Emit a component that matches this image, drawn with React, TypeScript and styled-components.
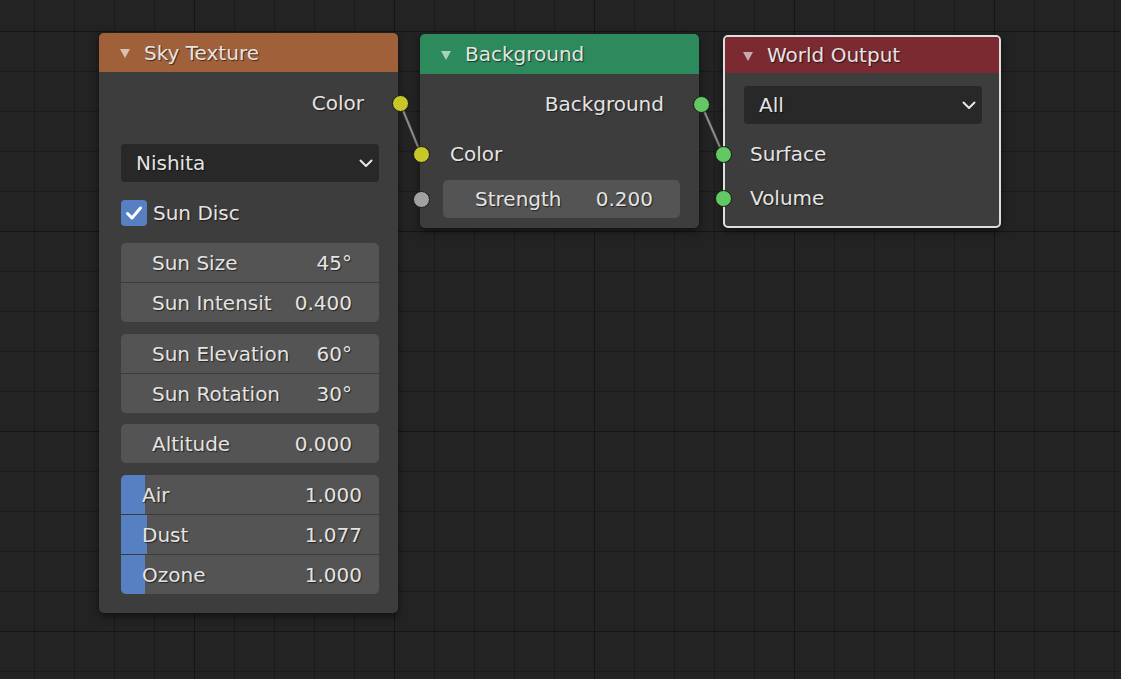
import React from 'react';
import styled, { createGlobalStyle } from 'styled-components';

const Global = createGlobalStyle`
  html, body { margin: 0; padding: 0; background: #232323; }
  body { font-family: "DejaVu Sans", "Noto Sans", sans-serif; }
`;

const Canvas = styled.div`
  position: relative;
  width: 1121px;
  height: 679px;
  overflow: hidden;
  background-color: #232323;
  background-image:
    linear-gradient(to right, #151515 1px, transparent 1px),
    linear-gradient(to bottom, #151515 1px, transparent 1px),
    linear-gradient(to right, #1b1b1b 1px, transparent 1px),
    linear-gradient(to bottom, #1b1b1b 1px, transparent 1px);
  background-size: 200px 100%, 100% 200px, 40px 100%, 100% 40px;
  background-position: 194px 0, 0 31px, 34px 0, 0 31px;
  font-family: "DejaVu Sans", "Noto Sans", sans-serif;
  font-size: 20px;
  color: #e4e4e4;
`;

const Links = styled.svg`
  position: absolute;
  left: 0;
  top: 0;
  pointer-events: none;
`;

const Node = styled.div<{ $x: number; $y: number; $w: number; $selected?: boolean; $pb: number }>`
  position: absolute;
  left: ${p => p.$x}px;
  top: ${p => p.$y}px;
  width: ${p => p.$w}px;
  box-sizing: border-box;
  display: flex;
  flex-direction: column;
  padding-bottom: ${p => p.$pb}px;
  background: #3d3d3d;
  border-radius: 5px;
  border: ${p => (p.$selected ? '2px solid #dedede' : 'none')};
  box-shadow: 0 3px 9px rgba(0, 0, 0, 0.55);
`;

const Header = styled.div<{ $color: string; $h: number; $pl: number; $r: number }>`
  height: ${p => p.$h}px;
  background: ${p => p.$color};
  border-radius: ${p => p.$r}px ${p => p.$r}px 0 0;
  display: flex;
  align-items: center;
  padding-left: ${p => p.$pl}px;
  gap: 14px;
`;

const Collapse = styled.span`
  width: 0;
  height: 0;
  border-left: 5.5px solid transparent;
  border-right: 5.5px solid transparent;
  border-top: 9px solid rgba(255, 255, 255, 0.6);
  margin-top: 2px;
`;

const Label = styled.span`
  position: relative;
  white-space: nowrap;
  text-shadow: 1px 1px 1px rgba(0, 0, 0, 0.6);
`;

const SocketRow = styled.div<{ $out?: boolean; $mt: number; $pad: number; $h?: number }>`
  position: relative;
  height: ${p => p.$h ?? 40}px;
  margin-top: ${p => p.$mt}px;
  display: flex;
  align-items: center;
  justify-content: ${p => (p.$out ? 'flex-end' : 'flex-start')};
  padding: ${p => (p.$out ? `0 ${p.$pad}px 0 0` : `0 0 0 ${p.$pad}px`)};
`;

const Socket = styled.span<{ $color: string; $side: 'left' | 'right'; $off: number }>`
  position: absolute;
  top: 50%;
  ${p => p.$side}: ${p => p.$off}px;
  width: 17px;
  height: 17px;
  margin-top: -8.5px;
  box-sizing: border-box;
  border-radius: 50%;
  background: ${p => p.$color};
  border: 1px solid #181818;
`;

const Dropdown = styled.div<{ $mt: number; $ml: number; $mr: number }>`
  margin: ${p => p.$mt}px ${p => p.$mr}px 0 ${p => p.$ml}px;
  height: 38px;
  box-sizing: border-box;
  background: #282828;
  border-radius: 4px;
  display: flex;
  align-items: center;
  justify-content: space-between;
  padding: 0 6px 0 15px;
`;

const CheckRow = styled.div`
  margin: 18px 19px 0 22px;
  height: 26px;
  display: flex;
  align-items: center;
  gap: 6px;
`;

const CheckBox = styled.span`
  width: 26px;
  height: 26px;
  border-radius: 4px;
  background: #5680c2;
  display: flex;
  align-items: center;
  justify-content: center;
`;

const FieldGroup = styled.div<{ $mt: number; $ml: number; $mr: number }>`
  margin: ${p => p.$mt}px ${p => p.$mr}px 0 ${p => p.$ml}px;
  border-radius: 5px;
  overflow: hidden;
  background: #545454;
  display: flex;
  flex-direction: column;
`;

const FieldRow = styled.div<{ $pl: number; $pr: number; $h?: number }>`
  position: relative;
  height: ${p => p.$h ?? 39}px;
  box-sizing: content-box;
  display: flex;
  align-items: center;
  justify-content: space-between;
  padding: 0 ${p => p.$pr}px 0 ${p => p.$pl}px;
  & + & {
    border-top: 1px solid #3b3b3b;
  }
`;

const Fill = styled.span`
  position: absolute;
  left: 0;
  top: 0;
  bottom: 0;
  background: #5680c2;
`;

const Chevron = () => (
  <svg width="14" height="9" viewBox="0 0 14 9">
    <polyline points="1.5,1.5 7,7 12.5,1.5" fill="none" stroke="#e6e6e6" strokeWidth="2" strokeLinecap="round" strokeLinejoin="round" />
  </svg>
);

const Check = () => (
  <svg width="20" height="20" viewBox="0 0 20 20">
    <polyline points="3.5,10.5 8,15 16.5,5" fill="none" stroke="#ffffff" strokeWidth="3" strokeLinecap="round" strokeLinejoin="round" />
  </svg>
);

const YELLOW = '#c7c729';
const GREEN = '#63c763';
const GREY = '#a1a1a1';

type Field = { label: string; value: string; fill?: number };

const Group = ({ fields, mt, pl, pr }: { fields: Field[]; mt: number; pl: number; pr: number }) => (
  <FieldGroup $mt={mt} $ml={22} $mr={19}>
    {fields.map(f => (
      <FieldRow key={f.label} $pl={pl} $pr={pr}>
        {f.fill !== undefined && <Fill style={{ width: f.fill }} />}
        <Label>{f.label}</Label>
        <Label>{f.value}</Label>
      </FieldRow>
    ))}
  </FieldGroup>
);

export default function App() {
  return (
    <Canvas>
      <Global />
      <Links width={1121} height={679}>
        <line x1={400} y1={103} x2={421} y2={154} stroke="#2a2a2a" strokeWidth={4} />
        <line x1={400} y1={103} x2={421} y2={154} stroke="#8c8c8c" strokeWidth={2} />
        <line x1={701} y1={104} x2={723} y2={154} stroke="#2a2a2a" strokeWidth={4} />
        <line x1={701} y1={104} x2={723} y2={154} stroke="#8c8c8c" strokeWidth={2} />
      </Links>

      <Node $x={99} $y={33} $w={299} $pb={19}>
        <Header $color="#a0613a" $h={39} $pl={21} $r={5}>
          <Collapse />
          <Label>Sky Texture</Label>
        </Header>
        <SocketRow $out $mt={11} $pad={34}>
          <Label>Color</Label>
          <Socket $color={YELLOW} $side="right" $off={-10.5} />
        </SocketRow>
        <Dropdown $mt={21} $ml={22} $mr={19}>
          <Label>Nishita</Label>
          <Chevron />
        </Dropdown>
        <CheckRow>
          <CheckBox>
            <Check />
          </CheckBox>
          <Label>Sun Disc</Label>
        </CheckRow>
        <Group
          mt={17}
          pl={31}
          pr={27}
          fields={[
            { label: 'Sun Size', value: '45°' },
            { label: 'Sun Intensit', value: '0.400' },
          ]}
        />
        <Group
          mt={12}
          pl={31}
          pr={27}
          fields={[
            { label: 'Sun Elevation', value: '60°' },
            { label: 'Sun Rotation', value: '30°' },
          ]}
        />
        <Group mt={11} pl={31} pr={27} fields={[{ label: 'Altitude', value: '0.000' }]} />
        <Group
          mt={12}
          pl={21}
          pr={17}
          fields={[
            { label: 'Air', value: '1.000', fill: 24 },
            { label: 'Dust', value: '1.077', fill: 26 },
            { label: 'Ozone', value: '1.000', fill: 24 },
          ]}
        />
      </Node>

      <Node $x={420} $y={34} $w={279} $pb={10}>
        <Header $color="#2c8a5c" $h={40} $pl={21} $r={5}>
          <Collapse />
          <Label>Background</Label>
        </Header>
        <SocketRow $out $mt={10} $pad={35}>
          <Label>Background</Label>
          <Socket $color={GREEN} $side="right" $off={-10.5} />
        </SocketRow>
        <SocketRow $mt={10} $pad={30}>
          <Socket $color={YELLOW} $side="left" $off={-7.5} />
          <Label>Color</Label>
        </SocketRow>
        <SocketRow $mt={6} $pad={0} $h={38}>
          <Socket $color={GREY} $side="left" $off={-7.5} />
          <FieldGroup $mt={0} $ml={23} $mr={19} style={{ flex: 1 }}>
            <FieldRow $pl={32} $pr={27} $h={38}>
              <Label>Strength</Label>
              <Label>0.200</Label>
            </FieldRow>
          </FieldGroup>
        </SocketRow>
      </Node>

      <Node $x={723} $y={35} $w={278} $pb={8} $selected>
        <Header $color="#7b2a31" $h={36} $pl={18} $r={3}>
          <Collapse />
          <Label>World Output</Label>
        </Header>
        <Dropdown $mt={13} $ml={19} $mr={17}>
          <Label>All</Label>
          <Chevron />
        </Dropdown>
        <SocketRow $mt={10} $pad={25}>
          <Socket $color={GREEN} $side="left" $off={-10.5} />
          <Label>Surface</Label>
        </SocketRow>
        <SocketRow $mt={4} $pad={25}>
          <Socket $color={GREEN} $side="left" $off={-10.5} />
          <Label>Volume</Label>
        </SocketRow>
      </Node>
    </Canvas>
  );
}
